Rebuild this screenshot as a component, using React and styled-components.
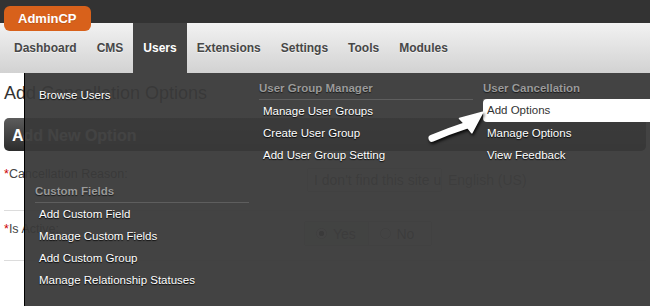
import React from "react";
import styled, { createGlobalStyle } from "styled-components";

const GlobalStyle = createGlobalStyle`
  html, body { margin: 0; padding: 0; background: #fff; overflow: hidden; }
  body { font-family: "Liberation Sans", Arial, sans-serif; }
  * { box-sizing: border-box; }
`;

const Page = styled.div`
  position: relative;
  width: 650px;
  height: 306px;
  overflow: hidden;
`;

const TopBar = styled.header`
  height: 23px;
  background: #333;
  padding-left: 4px;
  display: flex;
  align-items: flex-start;
`;

const Badge = styled.div`
  position: relative;
  z-index: 2;
  margin-top: 6px;
  height: 25px;
  line-height: 25px;
  padding: 0 14px 0 14px;
  background: #d8611b;
  border-radius: 6px;
  color: #fff;
  font-weight: bold;
  font-size: 13px;
  text-shadow: 0 1px 0 rgba(0, 0, 0, 0.15);
`;

const Nav = styled.nav`
  height: 50px;
  display: flex;
  padding-left: 4px;
  background: linear-gradient(#f2f2f2, #d2d2d2);
`;

const NavItem = styled.div`
  padding: 0 10px;
  line-height: 50px;
  font-size: 12px;
  font-weight: bold;
  color: ${(p) => (p.$active ? "#fff" : "#474747")};
  background: ${(p) => (p.$active ? "#434343" : "transparent")};
  text-shadow: ${(p) => (p.$active ? "none" : "0 1px 0 rgba(255,255,255,0.6)")};
`;

const Content = styled.main`
  padding: 0 4px;
  color: #333;
`;

const Title = styled.h1`
  margin: 9px 0 14px;
  font-size: 18px;
  line-height: 22px;
  font-weight: normal;
  color: #333;
`;

const SectionBar = styled.div`
  height: 33px;
  line-height: 35px;
  padding-left: 8px;
  border-radius: 5px;
  background: linear-gradient(#5c5c5c, #2c2c2c);
  color: #fff;
  font-size: 16px;
  font-weight: bold;
`;

const FormRow = styled.div`
  display: flex;
  align-items: flex-start;
  padding: ${(p) => p.$pt}px 0 ${(p) => p.$pb}px;
  border-bottom: 1px solid #dcdcdc;
`;

const Label = styled.div`
  width: 300px;
  flex: none;
  margin-top: ${(p) => p.$shift || 0}px;
  font-size: 12.5px;
  line-height: 16px;
  color: #444;
`;

const Req = styled.span`
  color: #c00;
`;

const Field = styled.div`
  display: flex;
  align-items: center;
`;

const TextInput = styled.div`
  width: 135px;
  height: 24px;
  margin-left: 3px;
  padding: 0 6px;
  border: 1px solid #ccc;
  border-radius: 2px;
  line-height: 22px;
  font-size: 14px;
  color: #777;
  white-space: nowrap;
  overflow: hidden;
`;

const Lang = styled.span`
  margin-left: 6px;
  font-size: 14px;
  color: #888;
  white-space: nowrap;
`;

const RadioGroup = styled.div`
  display: flex;
  width: 128px;
  height: 25px;
  border: 1px solid #ccc;
  border-radius: 2px;
`;

const RadioOption = styled.div`
  flex: 1;
  display: flex;
  align-items: center;
  gap: 6px;
  padding-left: 11px;
  font-size: 14px;
  color: #777;
  background: ${(p) => (p.$checked ? "#e9efe9" : "transparent")};
  & + & { border-left: 1px solid #ccc; }
`;

const Radio = styled.span`
  width: 11px;
  height: 11px;
  border-radius: 50%;
  border: 1px solid #aaa;
  background: ${(p) => (p.$checked ? "radial-gradient(#555 0 2.5px, #fff 3px)" : "#fff")};
`;

const Dropdown = styled.div`
  position: absolute;
  top: 73px;
  left: 24px;
  right: 0;
  bottom: 0;
  z-index: 3;
  overflow: hidden;
  background: rgba(57, 57, 57, 0.95);
  border-left: 1px solid #000;
  padding: 7px 0 0 10px;
`;

const MenuGrid = styled.div`
  display: grid;
  grid-template-columns: repeat(3, 214px);
  column-gap: 10px;
  row-gap: 17px;
  width: 662px;
`;

const Column = styled.div`
  display: flex;
  flex-direction: column;
`;

const Heading = styled.div`
  font-size: 11.5px;
  font-weight: bold;
  line-height: 16px;
  color: #9a9a9a;
  padding-bottom: 3px;
  border-bottom: 1px solid #5e5e5e;
  text-shadow: 0 1px 1px rgba(0, 0, 0, 0.6);
`;

const MenuItem = styled.div`
  margin-top: ${(p) => (p.$active ? -1 : p.$gap || 0)}px;
  padding-left: 4px;
  font-size: 11.5px;
  line-height: ${(p) => (p.$active ? 23 : 22)}px;
  white-space: nowrap;
  color: ${(p) => (p.$active ? "#333" : "#fff")};
  background: ${(p) => (p.$active ? "#fff" : "transparent")};
  border-radius: ${(p) => (p.$active ? "4px 0 0 4px" : "0")};
  text-shadow: ${(p) => (p.$active ? "none" : "0 1px 1px rgba(0,0,0,0.9)")};
`;

const Pointer = styled.svg`
  position: absolute;
  left: 425px;
  top: 104px;
  z-index: 5;
  overflow: visible;
  filter: drop-shadow(1px 2px 1.5px rgba(0, 0, 0, 0.85));
`;

const navItems = ["Dashboard", "CMS", "Users", "Extensions", "Settings", "Tools", "Modules"];

export default function App() {
  return (
    <>
      <GlobalStyle />
      <Page>
        <TopBar>
          <Badge>AdminCP</Badge>
        </TopBar>
        <Nav>
          {navItems.map((n) => (
            <NavItem key={n} $active={n === "Users"}>
              {n}
            </NavItem>
          ))}
        </Nav>
        <Content>
          <Title>Add Cancellation Options</Title>
          <SectionBar>Add New Option</SectionBar>
          <FormRow $pt={17} $pb={18}>
            <Label $shift={-2}>
              <Req>*</Req>Cancellation Reason:
            </Label>
            <Field>
              <TextInput>I don't find this site useful</TextInput>
              <Lang>English (US)</Lang>
            </Field>
          </FormRow>
          <FormRow $pt={10} $pb={14}>
            <Label $shift={0}>
              <Req>*</Req>Is Active:
            </Label>
            <Field>
              <RadioGroup>
                <RadioOption $checked>
                  <Radio $checked />
                  Yes
                </RadioOption>
                <RadioOption>
                  <Radio />
                  No
                </RadioOption>
              </RadioGroup>
            </Field>
          </FormRow>
        </Content>
        <Dropdown>
          <MenuGrid>
            <Column>
              <MenuItem $gap={4}>Browse Users</MenuItem>
            </Column>
            <Column>
              <Heading>User Group Manager</Heading>
              <MenuItem>Manage User Groups</MenuItem>
              <MenuItem>Create User Group</MenuItem>
              <MenuItem>Add User Group Setting</MenuItem>
            </Column>
            <Column>
              <Heading>User Cancellation</Heading>
              <MenuItem $active>Add Options</MenuItem>
              <MenuItem>Manage Options</MenuItem>
              <MenuItem>View Feedback</MenuItem>
            </Column>
            <Column>
              <Heading>Custom Fields</Heading>
              <MenuItem>Add Custom Field</MenuItem>
              <MenuItem>Manage Custom Fields</MenuItem>
              <MenuItem>Add Custom Group</MenuItem>
              <MenuItem>Manage Relationship Statuses</MenuItem>
            </Column>
          </MenuGrid>
        </Dropdown>
        <Pointer width="64" height="42" viewBox="0 0 64 42">
          <path d="M7 34.3 Q24 27 41 21.5" stroke="#fff" strokeWidth="7" strokeLinecap="round" fill="none" />
          <path d="M57.7 8.3 L34.5 14.5 Q40 20 46.8 28.8 Z" fill="#fff" stroke="#fff" strokeWidth="1.5" strokeLinejoin="round" />
        </Pointer>
      </Page>
    </>
  );
}
